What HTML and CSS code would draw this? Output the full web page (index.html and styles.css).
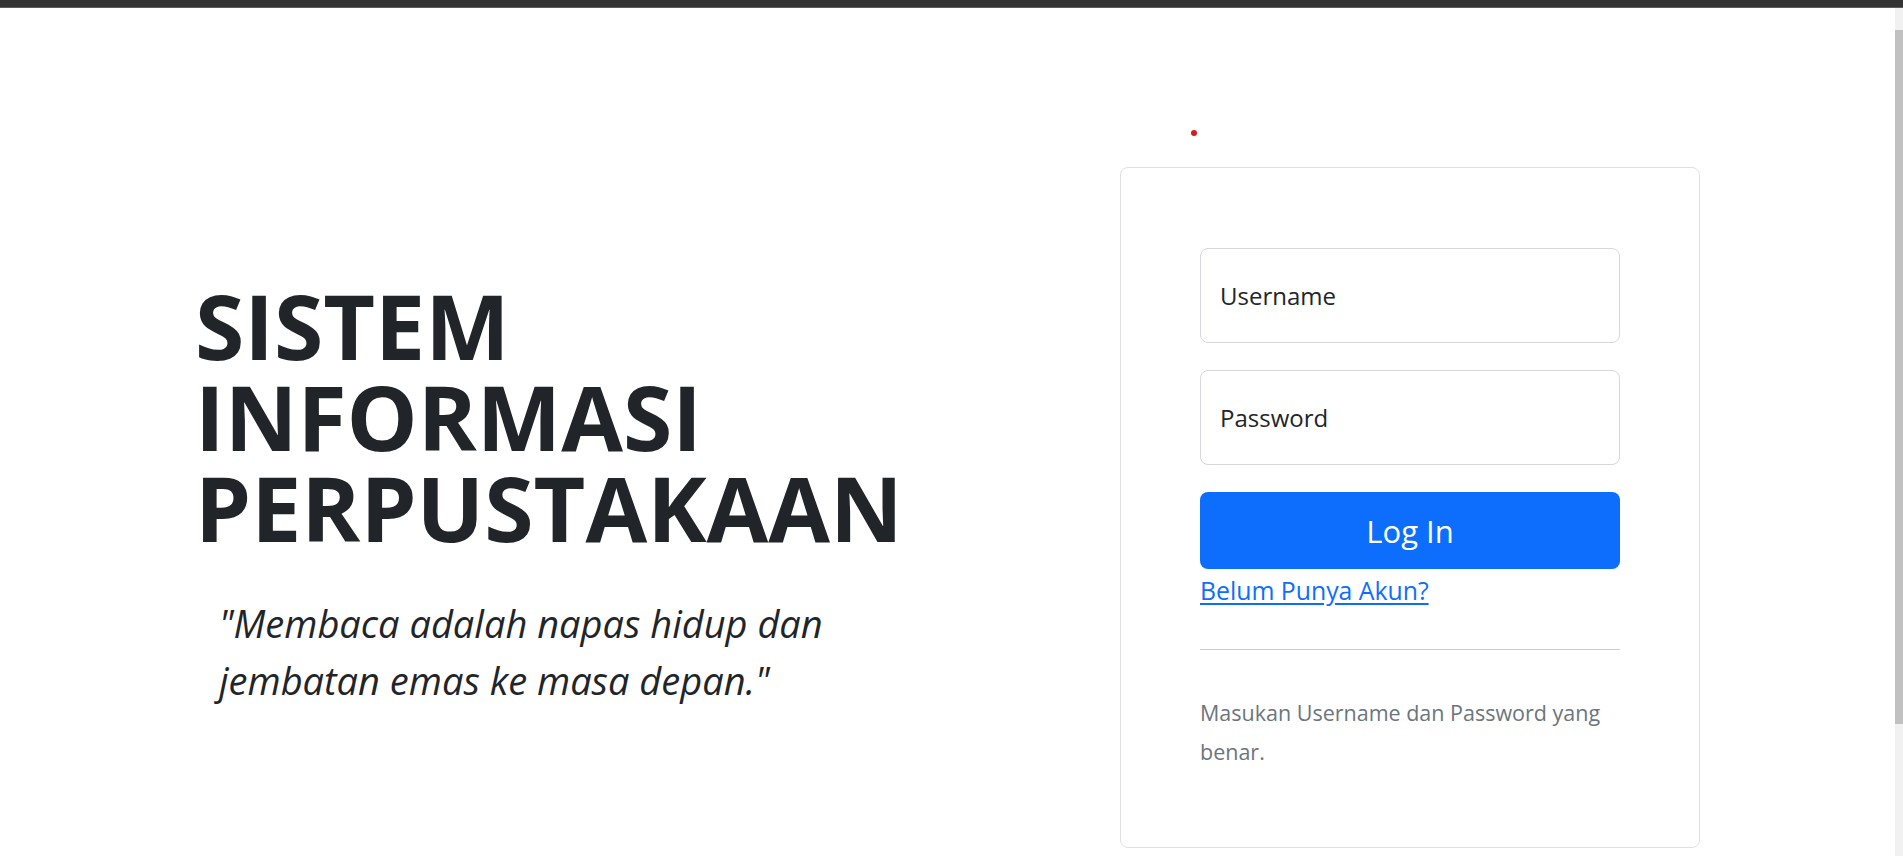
FILE: index.html
```html
<!DOCTYPE html>
<html lang="id">
<head>
<meta charset="utf-8">
<title>Login - Sistem Informasi Perpustakaan</title>
<link rel="stylesheet" href="styles.css">
</head>
<body>
<div class="topbar"></div>
<div class="viewport">
  <main class="page">
    <div class="container">
      <section class="intro">
        <h1 class="title"><span class="title-line">SISTEM</span><span class="title-line">INFORMASI</span><span class="title-line">PERPUSTAKAAN</span></h1>
        <p class="quote">"Membaca adalah napas hidup dan jembatan emas ke masa depan."</p>
      </section>
      <section class="login-col">
        <div class="dot-row"><span class="dot"></span></div>
        <form class="card" onsubmit="return false">
          <input class="field" type="text" placeholder="Username">
          <input class="field field-gap" type="password" placeholder="Password">
          <button class="btn" type="submit">Log In</button>
          <a class="link" href="#">Belum Punya Akun?</a>
          <hr class="divider">
          <p class="hint">Masukan Username dan Password yang benar.</p>
        </form>
      </section>
    </div>
  </main>
  <div class="scrollbar"><div class="thumb"></div></div>
</div>
</body>
</html>
```
FILE: styles.css
```css
html, body {
  margin: 0;
  padding: 0;
  height: 100%;
  overflow: hidden;
}
body {
  font-family: "Open Sans", "Noto Sans", sans-serif;
  color: #212529;
  background: #fff;
  display: flex;
  flex-direction: column;
}
.topbar {
  height: 7px;
  background: #333333;
  border-bottom: 1px solid #5c5c5c;
  flex: none;
}
.viewport {
  flex: 1;
  display: flex;
  min-height: 0;
}
.page {
  flex: 1;
  min-width: 0;
}
.container {
  display: flex;
  padding: 0 195px;
}
.intro {
  flex: 1;
  padding-top: 272px;
}
.title {
  margin: 0;
  font-size: 89.5px;
  font-weight: 700;
  line-height: 91px;
}
.title-line {
  display: block;
  height: 91px;
}
.quote {
  margin: 42px 0 0 24px;
  max-width: 680px;
  font-size: 38px;
  font-style: italic;
  line-height: 57px;
}
.login-col {
  width: 580px;
  flex: none;
  padding-top: 122px;
}
.dot-row {
  height: 6px;
  padding-left: 71px;
  margin-bottom: 31px;
}
.dot {
  display: block;
  width: 6px;
  height: 6px;
  border-radius: 50%;
  background: #d91a1a;
}
.card {
  box-sizing: border-box;
  width: 580px;
  border: 1px solid #e0e0e0;
  border-radius: 8px;
  padding: 80px 79px 76px;
  display: flex;
  flex-direction: column;
}
.field {
  box-sizing: border-box;
  height: 95px;
  width: 100%;
  margin: 0;
  border: 1px solid #d6d8db;
  border-radius: 8px;
  padding: 0 19px;
  font-family: inherit;
  font-size: 24px;
  color: #212529;
  background: #fff;
  outline: none;
}
.field::placeholder {
  color: #212529;
  opacity: 1;
}
.field-gap {
  margin-top: 27px;
}
.btn {
  margin-top: 27px;
  height: 77px;
  border: 0;
  border-radius: 8px;
  background: #0d6efd;
  color: #fff;
  font-family: inherit;
  font-size: 31px;
  cursor: pointer;
}
.link {
  margin-top: 3px;
  align-self: flex-start;
  font-size: 24.8px;
  line-height: 37px;
  color: #0d6efd;
  text-decoration: underline;
  text-underline-offset: 3px;
}
.divider {
  margin: 40px 0 0;
  border: 0;
  border-top: 1px solid #cbcccd;
  height: 0;
}
.hint {
  margin: 43px 0 0;
  font-size: 21.5px;
  line-height: 39px;
  color: #6c757d;
}
.scrollbar {
  width: 8px;
  flex: none;
  background: #f1f1f1;
  padding-top: 22px;
  box-sizing: border-box;
}
.thumb {
  height: 694px;
  background: #c1c1c1;
}
```
